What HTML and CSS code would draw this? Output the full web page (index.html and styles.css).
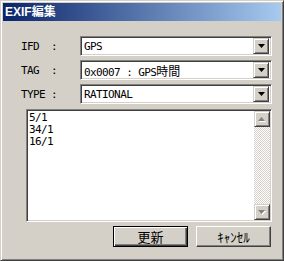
FILE: index.html
```html
<!DOCTYPE html>
<html lang="ja">
<head>
  <meta charset="UTF-8" />
  <title>EXIF編集</title>
  <link rel="stylesheet" href="styles.css">
</head>
<body>
  <div class="window">
    <div class="titlebar">EXIF編集</div>
    <div class="content">
      <div class="row">
        <span class="label">IFD  :</span>
        <div class="combo">
          <span class="value">GPS</span>
          <span class="drop"><svg width="7" height="4" viewBox="0 0 7 4"><polygon points="0,0 7,0 3.5,4" fill="#000"/></svg></span>
        </div>
      </div>
      <div class="row">
        <span class="label">TAG  :</span>
        <div class="combo">
          <span class="value">0x0007 : GPS<span class="jp">時間</span></span>
          <span class="drop"><svg width="7" height="4" viewBox="0 0 7 4"><polygon points="0,0 7,0 3.5,4" fill="#000"/></svg></span>
        </div>
      </div>
      <div class="row">
        <span class="label">TYPE :</span>
        <div class="combo">
          <span class="value">RATIONAL</span>
          <span class="drop"><svg width="7" height="4" viewBox="0 0 7 4"><polygon points="0,0 7,0 3.5,4" fill="#000"/></svg></span>
        </div>
      </div>
      <div class="memo">
        <div class="memo-text">5/1
34/1
16/1</div>
        <div class="scrollbar">
          <span class="sbtn"><svg width="8" height="5" viewBox="0 0 8 5"><polygon points="4,1 8,5 1,5" fill="#fff"/><polygon points="3.5,0 7,4 0,4" fill="#808080"/></svg></span>
          <span class="track"></span>
          <span class="sbtn"><svg width="8" height="5" viewBox="0 0 8 5"><polygon points="1,1 8,1 4.5,5" fill="#fff"/><polygon points="0,0 7,0 3.5,4" fill="#808080"/></svg></span>
        </div>
      </div>
      <div class="buttons">
        <button class="btn default"><span class="jp">更新</span></button>
        <button class="btn"><span class="jp">ｷｬﾝｾﾙ</span></button>
      </div>
    </div>
  </div>
</body>
</html>
```

FILE: styles.css
```css
body {
  margin: 0;
  background: #d4d0c8;
  font-family: "DejaVu Sans Mono", "Noto Sans CJK JP", monospace;
  font-size: 11px;
  letter-spacing: -0.6px;
  color: #000;
}
.window {
  width: 284px;
  height: 261px;
  box-sizing: border-box;
  background: #d4d0c8;
  border: 1px solid;
  border-color: #d4d0c8 #404040 #404040 #d4d0c8;
  box-shadow: inset 1px 1px #fff, inset -1px -1px #808080;
  padding: 2px;
}
.titlebar {
  height: 18px;
  line-height: 18px;
  padding-left: 2px;
  background: linear-gradient(to right, #0a246a, #a6caf0);
  color: #fff;
  font-family: "Liberation Sans", "Noto Sans CJK JP", sans-serif;
  font-weight: bold;
  font-size: 12px;
  letter-spacing: 0;
}
.content {
  padding: 15px 9px 0 18px;
}
.row {
  display: flex;
  align-items: center;
  height: 20px;
  margin-bottom: 4px;
}
.label {
  width: 59px;
  white-space: pre;
}
.combo {
  width: 192px;
  height: 20px;
  box-sizing: border-box;
  display: flex;
  align-items: center;
  background: #fff;
  border: 1px solid;
  border-color: #808080 #fff #fff #808080;
  box-shadow: inset 1px 1px #404040, inset -1px -1px #d4d0c8;
  padding: 1px 2px 1px 2px;
}
.value {
  flex: 1;
  padding-left: 1px;
  white-space: pre;
}
.jp {
  font-family: "Noto Sans CJK JP", sans-serif;
  font-size: 12px;
  letter-spacing: 0;
}
.drop {
  width: 16px;
  height: 16px;
  box-sizing: border-box;
  display: flex;
  align-items: center;
  justify-content: center;
  background: #d4d0c8;
  border: 1px solid;
  border-color: #d4d0c8 #404040 #404040 #d4d0c8;
  box-shadow: inset 1px 1px #fff, inset -1px -1px #808080;
}
.memo {
  margin: 5px 0 0 5px;
  height: 113px;
  box-sizing: border-box;
  display: flex;
  background: #fff;
  border: 1px solid;
  border-color: #808080 #fff #fff #808080;
  box-shadow: inset 1px 1px #404040, inset -1px -1px #d4d0c8;
  padding: 1px;
}
.memo-text {
  flex: 1;
  white-space: pre;
  line-height: 12px;
  padding: 1px 0 0 1px;
}
.scrollbar {
  width: 16px;
  display: flex;
  flex-direction: column;
}
.sbtn {
  height: 16px;
  box-sizing: border-box;
  display: flex;
  align-items: center;
  justify-content: center;
  background: #d4d0c8;
  border: 1px solid;
  border-color: #d4d0c8 #404040 #404040 #d4d0c8;
  box-shadow: inset 1px 1px #fff, inset -1px -1px #808080;
}
.track {
  flex: 1;
  background: repeating-conic-gradient(#d4d0c8 0 25%, #fff 0 50%) 0 0 / 2px 2px;
}
.buttons {
  display: flex;
  justify-content: flex-end;
  gap: 8px;
  margin: 4px 1px 0 0;
}
.btn {
  width: 75px;
  height: 21px;
  box-sizing: border-box;
  margin: 0;
  padding: 0;
  background: #d4d0c8;
  color: #000;
  border: 1px solid;
  border-color: #fff #404040 #404040 #fff;
  box-shadow: inset -1px -1px #808080;
  font-family: "Noto Sans CJK JP", sans-serif;
  font-size: 12px;
  line-height: 17px;
}
.btn .jp {
  font-size: 13px;
}
.btn.default {
  border: 1px solid #000;
  box-shadow: inset 1px 1px #fff, inset -1px -1px #404040, inset -2px -2px #808080;
}
```
